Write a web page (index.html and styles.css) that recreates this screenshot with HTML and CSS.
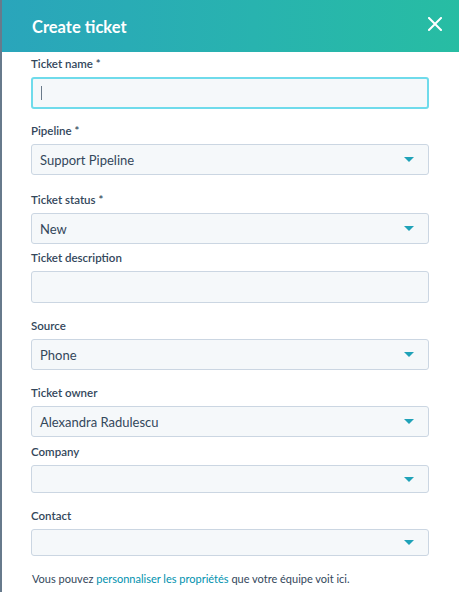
FILE: index.html
```html
<!DOCTYPE html>
<html>
<head>
<meta charset="utf-8">
<link rel="stylesheet" href="styles.css">
</head>
<body>
<div class="panel">
  <header class="header">
    <h1 class="title">Create ticket</h1>
    <svg class="close" width="14" height="14" viewBox="0 0 14 14"><path d="M1 1L13 13M13 1L1 13" stroke="#fff" stroke-width="2" stroke-linecap="square"/></svg>
  </header>
  <form class="form">
    <div class="field first">
      <label class="label">Ticket name *</label>
      <div class="box focus"><span class="caret"></span></div>
    </div>
    <div class="field wide">
      <label class="label">Pipeline *</label>
      <div class="box select"><span class="value">Support Pipeline</span><span class="arrow"></span></div>
    </div>
    <div class="field tighter">
      <label class="label">Ticket status *</label>
      <div class="box select"><span class="value">New</span><span class="arrow"></span></div>
    </div>
    <div class="field">
      <label class="label">Ticket description</label>
      <div class="box tall"></div>
    </div>
    <div class="field">
      <label class="label">Source</label>
      <div class="box select"><span class="value">Phone</span><span class="arrow"></span></div>
    </div>
    <div class="field tight">
      <label class="label">Ticket owner</label>
      <div class="box select"><span class="value">Alexandra Radulescu</span><span class="arrow"></span></div>
    </div>
    <div class="field">
      <label class="label">Company</label>
      <div class="box select short"><span class="value"></span><span class="arrow"></span></div>
    </div>
    <div class="field">
      <label class="label">Contact</label>
      <div class="box select shorter"><span class="value"></span><span class="arrow"></span></div>
    </div>
    <p class="note">Vous pouvez <a class="link" href="#">personnaliser les propriétés</a> que votre équipe voit ici.</p>
  </form>
</div>
</body>
</html>
```
FILE: styles.css
```css
html, body {
  margin: 0;
  padding: 0;
  background: #fff;
}
body {
  font-family: Lato, "Open Sans", sans-serif;
  color: #33475b;
  width: 459px;
  height: 592px;
  overflow: hidden;
}
.panel {
  border-left: 2px solid #677a8c;
  min-height: 592px;
  box-sizing: border-box;
}
.header {
  height: 52px;
  background: linear-gradient(90deg, #2aa5bb 0%, #28b3af 55%, #27bda3 100%);
  display: flex;
  align-items: center;
  justify-content: space-between;
  padding: 0 17px 0 30px;
}
.title {
  margin: 0;
  color: #fff;
  font-size: 16.5px;
  font-weight: 700;
  letter-spacing: 0;
  padding-top: 1px;
}
.close {
  display: block;
  margin-top: -4px;
}
.form {
  margin: 0;
  padding: 4px 30px 0 29px;
}
.field {
  display: flex;
  flex-direction: column;
  margin-bottom: 15px;
}
.field.first {
  margin-bottom: 14px;
}
.field.wide {
  margin-bottom: 17px;
}
.field.tight {
  margin-bottom: 7px;
}
.field.tighter {
  margin-bottom: 6px;
}
.label {
  font-size: 11.5px;
  line-height: 16px;
  font-weight: 600;
  color: #33475b;
  margin-bottom: 5px;
}
.box {
  box-sizing: border-box;
  height: 31px;
  background: #f5f8fa;
  border: 1px solid #cbd6e2;
  border-radius: 3px;
  display: flex;
  align-items: center;
  padding: 0 14px 0 8px;
}
.box.focus {
  height: 32px;
  border: 2px solid #6fdbeb;
  padding-left: 6px;
}
.box.tall {
  height: 32px;
}
.box.short {
  height: 28px;
}
.box.shorter {
  height: 27px;
}
.caret {
  width: 1px;
  height: 14px;
  background: #6a7a8a;
  margin-left: 2px;
}
.select {
  justify-content: space-between;
}
.value {
  font-size: 13px;
  color: #33475b;
}
.arrow {
  width: 0;
  height: 0;
  border-left: 5px solid transparent;
  border-right: 5px solid transparent;
  border-top: 5px solid #1fa2b8;
}
.note {
  margin: 14px 0 0 1px;
  font-size: 11px;
  line-height: 16px;
  color: #33475b;
}
.link {
  color: #0091ae;
  text-decoration: none;
}
```
